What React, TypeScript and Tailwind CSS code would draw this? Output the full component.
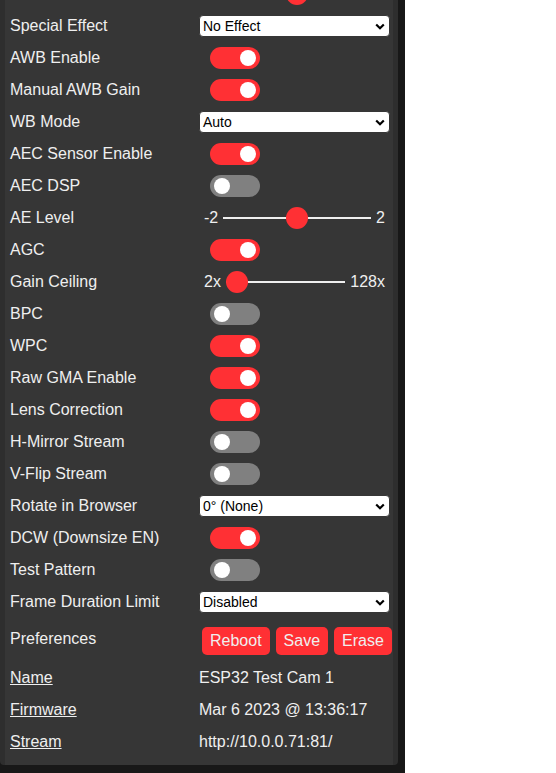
import React from 'react';

type Row =
  | { kind: 'select'; label: string; value: string }
  | { kind: 'toggle'; label: string; on: boolean }
  | { kind: 'range'; label: string; min: string; max: string; pos: number };

const rows: Row[] = [
  { kind: 'select', label: 'Special Effect', value: 'No Effect' },
  { kind: 'toggle', label: 'AWB Enable', on: true },
  { kind: 'toggle', label: 'Manual AWB Gain', on: true },
  { kind: 'select', label: 'WB Mode', value: 'Auto' },
  { kind: 'toggle', label: 'AEC Sensor Enable', on: true },
  { kind: 'toggle', label: 'AEC DSP', on: false },
  { kind: 'range', label: 'AE Level', min: '-2', max: '2', pos: 0.5 },
  { kind: 'toggle', label: 'AGC', on: true },
  { kind: 'range', label: 'Gain Ceiling', min: '2x', max: '128x', pos: 0 },
  { kind: 'toggle', label: 'BPC', on: false },
  { kind: 'toggle', label: 'WPC', on: true },
  { kind: 'toggle', label: 'Raw GMA Enable', on: true },
  { kind: 'toggle', label: 'Lens Correction', on: true },
  { kind: 'toggle', label: 'H-Mirror Stream', on: false },
  { kind: 'toggle', label: 'V-Flip Stream', on: false },
  { kind: 'select', label: 'Rotate in Browser', value: '0° (None)' },
  { kind: 'toggle', label: 'DCW (Downsize EN)', on: true },
  { kind: 'toggle', label: 'Test Pattern', on: false },
  { kind: 'select', label: 'Frame Duration Limit', value: 'Disabled' },
];

const info = [
  { label: 'Name', value: 'ESP32 Test Cam 1' },
  { label: 'Firmware', value: 'Mar 6 2023 @ 13:36:17' },
  { label: 'Stream', value: 'http://10.0.0.71:81/' },
];

const Toggle = ({ on }: { on: boolean }) => (
  <div className={`ml-[11px] w-[50px] h-[22px] rounded-full relative ${on ? 'bg-[#ff3034]' : 'bg-[#808080]'}`}>
    <div className={`absolute top-[3px] w-[16px] h-[16px] rounded-full bg-white ${on ? 'left-[30px]' : 'left-[4px]'}`} />
  </div>
);

const Select = ({ value }: { value: string }) => (
  <div className="w-full h-[22px] bg-white rounded-[4px] border border-[#363636] flex items-center justify-between pl-[3px] pr-[4px] text-[14px] text-black leading-none">
    <span>{value}</span>
    <svg width="10" height="7" viewBox="0 0 10 7">
      <path d="M1.2 1.5 L5 5.2 L8.8 1.5" fill="none" stroke="#000" strokeWidth="2.2" />
    </svg>
  </div>
);

const Range = ({ min, max, pos }: { min: string; max: string; pos: number }) => (
  <div className="w-full flex items-center">
    <span className="px-[5px]">{min}</span>
    <div className="flex-1 h-[22px] relative">
      <div className="absolute left-0 right-0 top-[10px] h-[2px] bg-[#efefef]" />
      <div
        className="absolute top-0 w-[22px] h-[22px] rounded-full bg-[#ff3034]"
        style={{ left: `calc(${pos} * (100% - 22px))` }}
      />
    </div>
    <span className="px-[5px]">{max}</span>
  </div>
);

export default function App() {
  return (
    <div className="flex w-[556px] h-[773px] overflow-hidden bg-white font-['Liberation_Sans',Arial,sans-serif]">
      <div className="w-[405px] h-full bg-[#181818] overflow-hidden shrink-0">
        <div className="w-[398px] -mt-[30px] bg-[#363636] rounded-[4px] border-x-[5px] border-[#2e2e2e] pl-[5px] pr-[3px] pt-[13px] pb-[12px] flex flex-col gap-[10px] text-[16px] text-[#efefef]">
          {/* saturation row, scrolled off the top: only its thumb shows */}
          <div className="flex h-[22px]">
            <div className="w-[189px] shrink-0" />
            <div className="flex-1 relative">
              <div className="absolute left-[87px] top-0 w-[22px] h-[22px] rounded-full bg-[#ff3034]" />
            </div>
          </div>

          {rows.map((r) => (
            <div key={r.label} className="flex items-center h-[22px] leading-[22px]">
              <div className="w-[189px] shrink-0">{r.label}</div>
              <div className="flex-1 flex items-center">
                {r.kind === 'toggle' && <Toggle on={r.on} />}
                {r.kind === 'select' && <Select value={r.value} />}
                {r.kind === 'range' && <Range min={r.min} max={r.max} pos={r.pos} />}
              </div>
            </div>
          ))}

          <div className="flex h-[34px]">
            <div className="w-[189px] shrink-0 pt-[5px] leading-[22px]">Preferences</div>
            <div className="flex gap-[6px] pt-[4px] ml-[3px]">
              <button className="h-[28px] px-[8px] rounded-[5px] bg-[#ff3034] text-[#efefef] text-[16px] leading-[28px]">Reboot</button>
              <button className="h-[28px] px-[8px] rounded-[5px] bg-[#ff3034] text-[#efefef] text-[16px] leading-[28px]">Save</button>
              <button className="h-[28px] px-[8px] rounded-[5px] bg-[#ff3034] text-[#efefef] text-[16px] leading-[28px]">Erase</button>
            </div>
          </div>

          {info.map((i) => (
            <div key={i.label} className="flex h-[22px] leading-[22px]">
              <a className="w-[189px] shrink-0 underline">{i.label}</a>
              <span>{i.value}</span>
            </div>
          ))}
        </div>
      </div>
      <div className="flex-1 bg-white" />
    </div>
  );
}
